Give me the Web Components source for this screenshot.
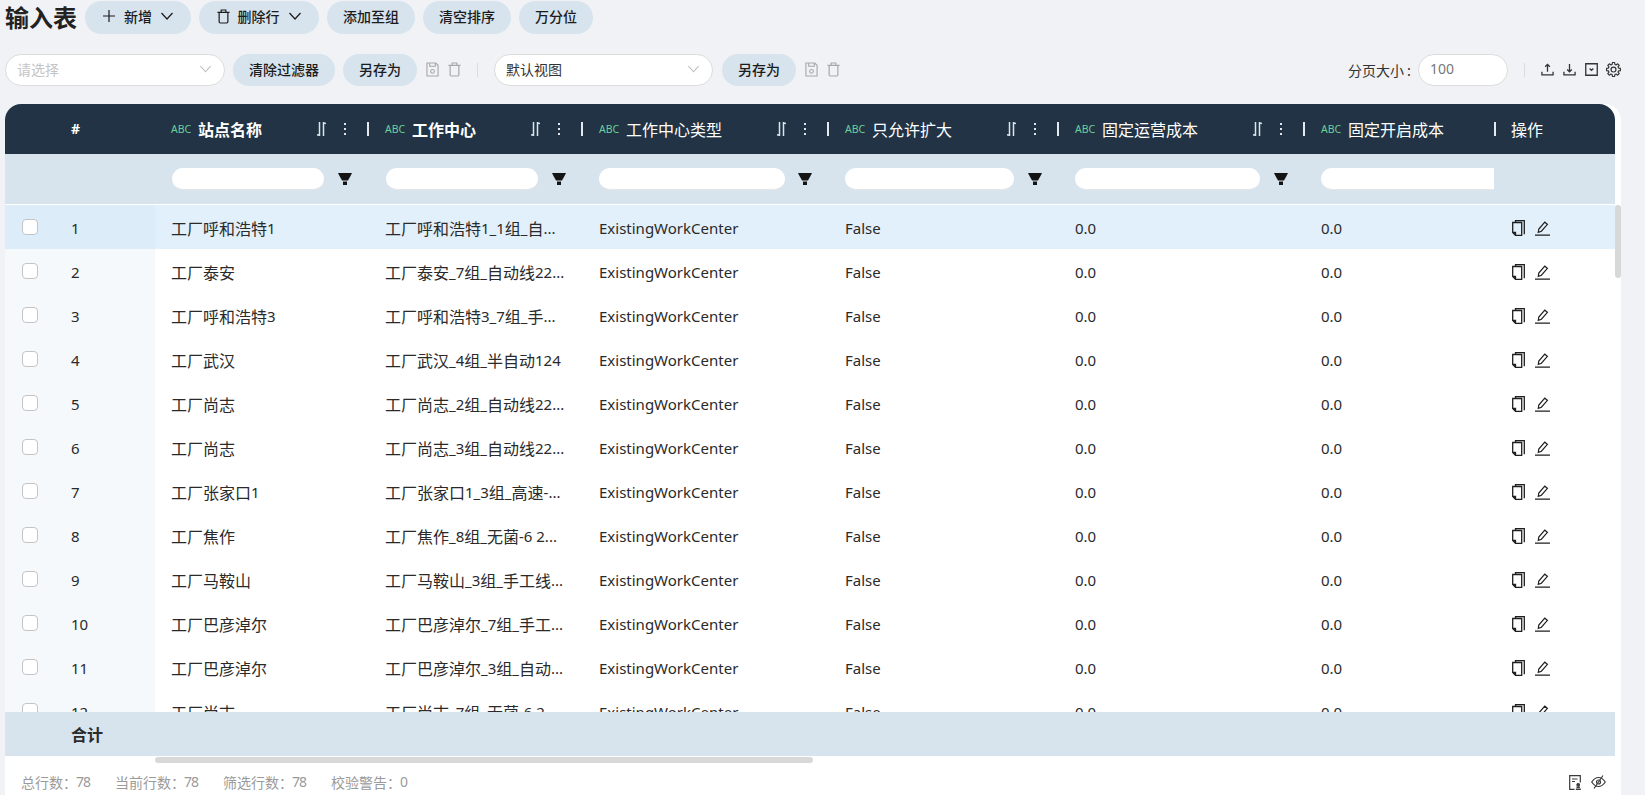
<!DOCTYPE html>
<html><head><meta charset="utf-8">
<style>
html,body{margin:0;padding:0;height:795px;overflow:hidden;background:#f0f2f5;font-family:"Noto Sans CJK SC","Noto Sans",sans-serif;color:#222}
</style></head><body>
<input-page></input-page>
<script>
const gearPath=(()=>{const p=[];const n=8;for(let i=0;i<n;i++){const a=i/n*2*Math.PI;const w=.2;[[a-w*1.35,4.9],[a-w*.75,6.6],[a+w*.75,6.6],[a+w*1.35,4.9]].forEach(([t,r])=>p.push((7+r*Math.cos(t)).toFixed(2)+' '+(7+r*Math.sin(t)).toFixed(2)))}return 'M'+p.join('L')+'z'})();
const I={
plus:'<svg width="14" height="14" viewBox="0 0 14 14" fill="none" stroke="currentColor" stroke-width="1.2"><path d="M7 1v12M1 7h12"/></svg>',
chev:'<svg width="14" height="14" viewBox="0 0 14 14" fill="none" stroke="currentColor" stroke-width="1.2"><path d="M1.5 4 7 10l5.500-6"/></svg>',
trash:'<svg width="13" height="15" viewBox="0 0 14 16" fill="none" stroke="currentColor" stroke-width="1.300"><path d="M.5 3.500h13M4.500 3.500V1h5v2.500M2.300 3.500v10.200q0 1.300 1.300 1.300h6.800q1.300 0 1.300-1.300V3.500"/></svg>',
save:'<svg width="13" height="15" viewBox="0 0 14 16" fill="none" stroke="currentColor" stroke-width="1.200"><path d="M1 1h9.500L13 3.500V15H1zM4 1v3.500h6V1"/><circle cx="7" cy="10" r="2"/></svg>',
up:'<svg width="13" height="13" viewBox="0 0 14 14" fill="none" stroke="currentColor" stroke-width="1.400"><path d="M7 9.500V1.500M4.500 4 7 1.500 9.500 4M1 9.500v3.200h12V9.500"/></svg>',
down:'<svg width="13" height="13" viewBox="0 0 14 14" fill="none" stroke="currentColor" stroke-width="1.400"><path d="M7 1v8.500M4.500 7 7 9.500 9.500 7M1 9.500v3.200h12V9.500"/></svg>',
box:'<svg width="13" height="13" viewBox="0 0 14 14" fill="none" stroke="currentColor" stroke-width="1.400"><path d="M.8.800h12.400v12.400H.8zM5 6l2 2 2-2"/></svg>',
gear:`<svg width="15" height="15" viewBox="0 0 14 14" fill="none" stroke="currentColor" stroke-width="1.100" stroke-linejoin="round" style="margin-left:-1px"><path d="${gearPath}"/><circle cx="7" cy="7" r="2.300"/></svg>`,
funnel:'<svg width="14" height="12" viewBox="0 0 14 12" fill="#141414"><path d="M0 0h14l-1.500 3L10 7.500H4L1.500 3z"/><rect x="5" y="8.500" width="4" height="3.500"/></svg>',
sort:'<svg width="10" height="14" viewBox="0 0 10 14" fill="none" stroke="currentColor" stroke-width="1.500"><path d="M3.500 0v14M3.500 13.300 1 12.800M7.500 14V0M7.500 1 10 1.500"/></svg>',
dots:'<svg width="4" height="14" viewBox="0 0 4 14" fill="currentColor"><rect x="1" y="1" width="2" height="2"/><rect x="1" y="6" width="2" height="2"/><rect x="1" y="11" width="2" height="2"/></svg>',
copy:'<svg width="13" height="16" viewBox="0 0 13 16" fill="none" stroke="#1f1f1f" stroke-width="1.300"><path d="M3.500 2V.7h8.800v13.600M.7 2.500h9v12.800H3.500L.7 12.500zM.7 12.500h2.800v2.800"/></svg>',
edit:'<svg width="15" height="15" viewBox="0 0 15 15" fill="none" stroke="#1f1f1f" stroke-width="1.200"><path d="M3.300 11.300 3.800 8 9.800 1.200l2.600 2.200-6 6.800zM0 14.200h15"/></svg>',
stamp:'<svg width="12" height="15" viewBox="0 0 12 15" fill="none" stroke="currentColor" stroke-width="1.200"><path d="M5.500 14.300H.7V.7h10.600V7.500M3 4h5.500M3 6.500h3"/><path d="M6.800 14.300h5M7.500 12.300h3.400" stroke-width="1.500"/><circle cx="9.200" cy="9.800" r="1.300" fill="currentColor"/></svg>',
eye:'<svg width="15" height="14" viewBox="0 0 15 14" fill="none" stroke="currentColor" stroke-width="1.200"><path d="M.7 7C3 3.500 5 2.500 7.500 2.500S12 3.500 14.300 7C12 10.500 10 11.500 7.500 11.500S3 10.500 .7 7z"/><circle cx="7.500" cy="7" r="2"/><path d="M12 .5 3 13.500"/></svg>'};

class UiBtn extends HTMLElement{constructor(){super();this.attachShadow({mode:'open'}).innerHTML=`<style>:host{display:inline-flex;align-items:center;justify-content:center;gap:8px;box-sizing:border-box;height:32px;padding-bottom:2px;border-radius:17px;background:#d7e3ed;font-size:14px;font-weight:500;color:#1c1c1c;white-space:nowrap}</style><slot></slot>`}}
customElements.define('ui-btn',UiBtn);

class UiSelect extends HTMLElement{constructor(){super();this.attachShadow({mode:'open'}).innerHTML=`<style>:host{display:flex;align-items:center;justify-content:space-between;box-sizing:border-box;height:32px;padding:0 10px 3px 11px;background:#fff;border:1px solid #dcdcdc;border-radius:16px;font-size:14px}svg{width:13px;color:#bdbdbd;margin-right:2px}</style><slot></slot>${I.chev}`}}
customElements.define('ui-select',UiSelect);

const COLS=[[155,214,'站点名称',1],[369,214,'工作中心',1],[583,246,'工作中心类型'],[829,230,'只允许扩大'],[1059,246,'固定运营成本'],[1305,191,'固定开启成本']];
const FW=[152,152,186,169,185,173];
const ROWS=[['工厂呼和浩特1','工厂呼和浩特1_1组_自...'],['工厂泰安','工厂泰安_7组_自动线22...'],['工厂呼和浩特3','工厂呼和浩特3_7组_手...'],['工厂武汉','工厂武汉_4组_半自动124'],['工厂尚志','工厂尚志_2组_自动线22...'],['工厂尚志','工厂尚志_3组_自动线22...'],['工厂张家口1','工厂张家口1_3组_高速-...'],['工厂焦作','工厂焦作_8组_无菌-6 2...'],['工厂马鞍山','工厂马鞍山_3组_手工线...'],['工厂巴彦淖尔','工厂巴彦淖尔_7组_手工...'],['工厂巴彦淖尔','工厂巴彦淖尔_3组_自动...'],['工厂尚志','工厂尚志_7组_无菌-6 2...']];
const mix=s=>s.replace(/[\u4e00-\u9fff]+/g,m=>`<span class="c">${m}</span>`);
const GRID='50px 100px 214px 214px 246px 230px 246px 191px 119px';

class DataTable extends HTMLElement{constructor(){super();
const head=COLS.map(([x,w,t,b],i)=>`<div class="th"><span class="abc">ABC</span><span class="tt${b?' b':''}">${t}</span>${i<5?`<span class="acts">${I.sort}${I.dots}</span>`:''}<i class="sep"></i></div>`).join('');
const filt=COLS.map((c,i)=>`<div class="fc"><div class="fi${i==5?' cut':''}" style="width:${FW[i]}px;${i<2?'margin-left:1px':''}"></div>${i<5?`<span class="fn">${I.funnel}</span>`:''}</div>`).join('');
const rows=ROWS.map((r,i)=>`<div class="tr${i==0?' on':''}"><div class="ck"><i></i></div><div class="no"><span>${i+1}</span></div><div class="td">${mix(r[0])}</div><div class="td">${mix(r[1])}</div><div class="td">ExistingWorkCenter</div><div class="td">False</div><div class="td">0.0</div><div class="td">0.0</div><div class="op">${I.copy}${I.edit}</div></div>`).join('');
this.attachShadow({mode:'open'}).innerHTML=`<style>
:host{display:flex;flex-direction:column;flex:none;position:relative;font-family:"Noto Sans",sans-serif;color:#2a2a2a}
.c{font-family:"Noto Sans CJK SC",sans-serif;font-size:16px}
.row{display:grid;grid-template-columns:${GRID};width:1610px;flex:none}
.hd{height:50px;background:#213345;color:#fff;border-radius:16px 16px 0 0;align-items:center}
.hash{grid-column:2;padding:0 0 2px 16px;font-weight:700;font-size:14px}
.th{display:flex;align-items:center;padding-left:16px;height:50px;position:relative;box-sizing:border-box}
.abc{font-size:10.500px;color:#6bd19a;width:27px;flex:none}
.tt{font-family:"Noto Sans CJK SC",sans-serif;font-size:16px}.tt.b{font-weight:700}
.acts{position:absolute;right:22px;display:flex;gap:17px;align-items:center;color:#dfe4e8}
.sep{position:absolute;right:0;top:18px;width:2px;height:14px;background:#e6e9ec}
.op-h{padding-left:15px;font-family:"Noto Sans CJK SC",sans-serif;font-size:16px}
.ft{height:50px;background:#d7e3ed;align-items:center;border-bottom:1px solid #fff;box-sizing:content-box}
.fc{display:flex;align-items:center;padding-left:16px;position:relative;overflow:hidden;height:50px}
.fi{height:22px;background:#fff;border-radius:11px;flex:none;box-sizing:border-box;border-bottom:1px solid #e6e6e6}
.fi.cut{border-radius:11px 0 0 11px}
.fn{position:absolute;right:17px;display:flex}
.body{flex:none;height:507px;overflow:hidden;width:1610px;position:relative}
.tr{display:grid;grid-template-columns:${GRID};height:44px;align-items:center;font-size:15px;background:#fff}
.tr.on{background:#e2f0fb}
.tr>*{height:44px;display:flex;align-items:center;white-space:nowrap}
.ck{padding-left:17px;box-sizing:border-box}
.ck i{width:14px;height:14px;border:1px solid #c4c4c4;border-radius:4px;background:#fff;display:block;margin-top:-1px}
.ck,.no{background:#f5f9fc}.tr.on .ck,.tr.on .no{background:#dcedf9}
.no{padding:2px 0 0 16px;box-sizing:border-box}
.td{padding:2px 0 0 16px;box-sizing:border-box}
.op{padding:2px 0 0 16px;gap:10px;color:#2a2a2a;box-sizing:border-box}
.sum{height:44px;background:#d7e3ed;align-items:center}
.sum b{grid-column:2;padding-left:16px;font:700 16px "Noto Sans CJK SC",sans-serif}
.hs{height:13px;position:relative;flex:none}
.hs i{position:absolute;left:150px;top:1px;width:658px;height:6px;border-radius:3px;background:#d8d8d8}
.vs{position:absolute;left:1610px;top:101px;width:6px;height:73px;border-radius:3px;background:#d8d8d8}
</style>
<div class="row hd"><div></div><div class="hash">#</div>${head}<div class="op-h">操作</div></div>
<div class="row ft"><div></div><div></div>${filt}<div></div></div>
<div class="body">${rows}</div>
<div class="row sum"><div></div><b>合计</b></div>
<div class="hs"><i></i></div>
<div class="vs"></div>`}}
customElements.define('data-table',DataTable);

class StatBar extends HTMLElement{constructor(){super();
const s=[['总行数','78'],['当前行数','78'],['筛选行数','78'],['校验警告','0']];
this.attachShadow({mode:'open'}).innerHTML=`<style>
:host{display:flex;align-items:center;height:26px;padding:0 15px 0 16px;gap:25px;font:14px "Noto Sans CJK SC",sans-serif;color:#9a9a9a;box-sizing:border-box;flex:none}
b{font:400 14px "Noto Sans",sans-serif;letter-spacing:-1px;margin-left:-1px}span{display:inline-flex}
.r{margin-left:auto;display:flex;gap:10px;color:#3a3a3a;align-items:center}
</style>${s.map(([a,b])=>`<span>${a}：<b>${b}</b></span>`).join('')}<div class="r">${I.stamp}${I.eye}</div>`}}
customElements.define('stat-bar',StatBar);

class InputPage extends HTMLElement{constructor(){super();
this.attachShadow({mode:'open'}).innerHTML=`<style>
:host{display:block;width:1645px;height:795px;font-family:"Noto Sans CJK SC","Noto Sans",sans-serif}
.r1{display:flex;align-items:center;height:34px;padding:0 0 0 5px}
h1{margin:-2px 9px 0 0;font-size:24px;font-weight:700;color:#222;width:71px;white-space:nowrap}
.r1 ui-btn{margin-right:8px;height:33px}
.r2{display:flex;align-items:center;height:32px;margin-top:20px;padding-left:5px;font-size:14px;color:#333}
.ic{display:inline-flex;gap:9px;color:#a8a8a8;align-items:center;margin:-2px 0 0 9px}
.dv{width:1px;height:14px;background:#dcdcdc}
.ph{color:#c4c4c4}
.right{display:flex;align-items:center;margin-left:auto;padding-right:24px}
.ic2{display:inline-flex;gap:9px;color:#333;align-items:center;margin-top:-2px}
.lbl{margin:-1px 7px 0 0}
.card{margin:18px 24px 0 5px;width:1616px;height:691px;background:#fff;display:flex;flex-direction:column;border-radius:16px 16px 0 0}
</style>
<div class="r1"><h1>输入表</h1>
<ui-btn style="width:106px">${I.plus}<span>新增</span>${I.chev}</ui-btn>
<ui-btn style="width:120px">${I.trash}<span>删除行</span>${I.chev}</ui-btn>
<ui-btn style="width:88px">添加至组</ui-btn><ui-btn style="width:88px">清空排序</ui-btn><ui-btn style="width:74px">万分位</ui-btn></div>
<div class="r2">
<ui-select style="width:220px"><span class="ph">请选择</span></ui-select>
<ui-btn style="width:102px;margin-left:8px">清除过滤器</ui-btn><ui-btn style="width:74px;margin-left:8px">另存为</ui-btn>
<span class="ic">${I.save}${I.trash}</span><i class="dv" style="margin:0 16px 0 16px"></i>
<ui-select style="width:219px"><span>默认视图</span></ui-select>
<ui-btn style="width:74px;margin-left:9px">另存为</ui-btn>
<span class="ic">${I.save}${I.trash}</span>
<div class="right"><span class="lbl">分页大小 :</span><ui-select style="width:90px"><span style="color:#777;font-family:'Noto Sans'">100</span><span></span></ui-select><i class="dv" style="margin:0 16px 0 16px"></i><span class="ic2">${I.up}${I.down}${I.box}${I.gear}</span></div>
</div>
<div class="card"><data-table></data-table><stat-bar></stat-bar></div>`;
this.shadowRoot.querySelectorAll('ui-select').forEach((e,i)=>{if(i==2){const s=e.shadowRoot.querySelector('svg');s&&s.remove()}});
}}
customElements.define('input-page',InputPage);
</script></body></html>
